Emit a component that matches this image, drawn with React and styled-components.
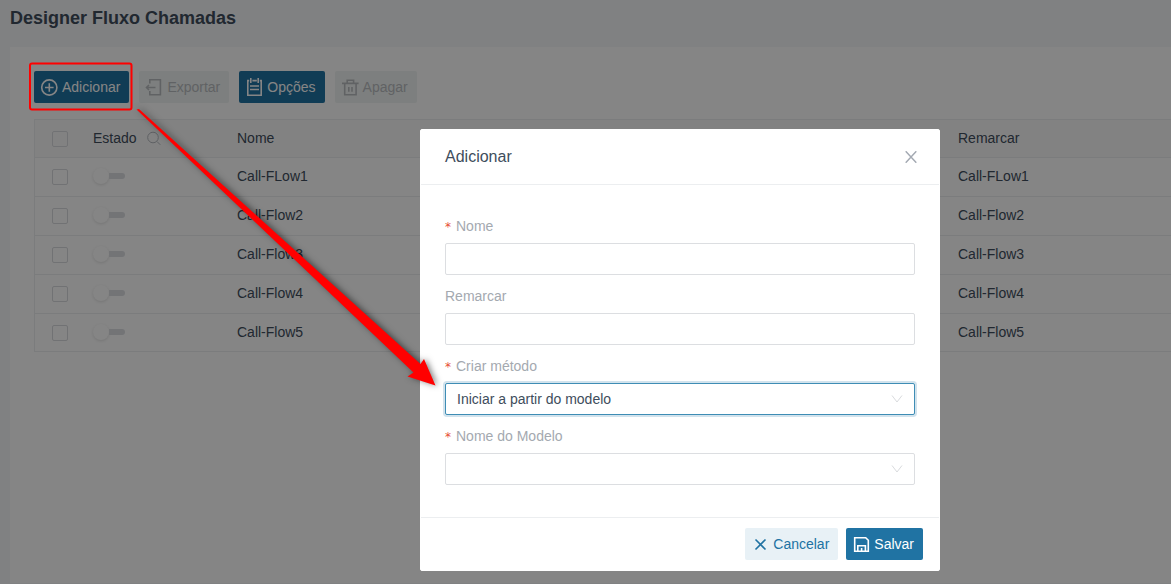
import React, { useState } from 'react';
import styled, { createGlobalStyle } from 'styled-components';

const flows = ['Call-FLow1', 'Call-Flow2', 'Call-Flow3', 'Call-Flow4', 'Call-Flow5'];

const AddIcon = () => (
  <Icon viewBox="0 0 18 18">
    <circle cx="9.3" cy="9.5" r="7.6" />
    <path d="M9.3 5.2v8.6M5 9.5h8.6" />
  </Icon>
);

const ExportIcon = () => (
  <Icon viewBox="0 0 18 18">
    <path d="M4.8 5.5V1.8h10.6v15H4.8v-3.7" />
    <path d="M10.5 9.5H1.5M4 7L1.5 9.5L4 12" />
  </Icon>
);

const OptionsIcon = () => (
  <Icon viewBox="0 0 18 18">
    <path d="M4.2 2.6H2.8v14.6h13.4V2.6h-1.4M7.4 2.6h4.4M5.8 0v5M13.2 0v5M5 8h9M5 11.5h9" />
  </Icon>
);

const DeleteIcon = () => (
  <Icon viewBox="0 0 18 18">
    <path d="M1 5.4h16.6M6.2 5.4V2.3h6.4v3.1M3.7 5.4v11.4h11.4V5.4M7.8 9v4.8M11 9v4.8" />
  </Icon>
);

const CancelIcon = () => (
  <Icon viewBox="0 0 18 18">
    <path d="M4.5 4.5l10 10M14.5 4.5l-10 10" />
  </Icon>
);

const SaveIcon = () => (
  <Icon viewBox="0 0 18 18">
    <path d="M2.7 2.7h11l2.6 2.6v11H2.7zM5.8 16.3v-5.6h7.6v5.6M9.6 13v3" />
  </Icon>
);

const SelectArrow = () => (
  <Arrow viewBox="0 0 12 12">
    <path d="M1 2.5l5 6.5l5-6.5" />
  </Arrow>
);

const App = () => {
  const [formData, setFormData] = useState({
    name: '',
    remark: '',
    method: 'template',
    template: '',
  });

  const handleChange = (e) => {
    setFormData({ ...formData, [e.target.name]: e.target.value });
  };

  return (
    <>
      <GlobalStyle />
      <Page>
        <Heading>Designer Fluxo Chamadas</Heading>
        <Card>
          <Toolbar>
            <Button type="button"><AddIcon />Adicionar</Button>
            <Button type="button" $variant="muted" disabled><ExportIcon />Exportar</Button>
            <Button type="button"><OptionsIcon />Opções</Button>
            <Button type="button" $variant="muted" disabled><DeleteIcon />Apagar</Button>
          </Toolbar>
          <Table>
            <thead>
              <tr>
                <Th $width="50px" $center><Checkbox aria-label="Todos" /></Th>
                <Th $width="144px">
                  <HeadLabel>
                    Estado
                    <SearchIcon viewBox="0 0 14 14">
                      <circle cx="6" cy="6.5" r="5.3" />
                      <path d="M10 10.5l3.3 3.3" />
                    </SearchIcon>
                  </HeadLabel>
                </Th>
                <Th>Nome</Th>
                <Th $width="221px">Remarcar</Th>
              </tr>
            </thead>
            <tbody>
              {flows.map((flow) => (
                <Row key={flow}>
                  <Td $center><Checkbox aria-label={flow} /></Td>
                  <Td><Switch role="switch" aria-label={`Estado ${flow}`} /></Td>
                  <Td>{flow}</Td>
                  <Td>{flow}</Td>
                </Row>
              ))}
            </tbody>
          </Table>
        </Card>
      </Page>

      <Mask>
        <Dialog role="dialog" aria-labelledby="dialog-title">
          <DialogHeader>
            <DialogTitle id="dialog-title">Adicionar</DialogTitle>
            <CloseButton type="button" aria-label="Fechar">
              <svg width="12" height="12" viewBox="0 0 12 12">
                <path d="M0.7 0.3l10.6 11.4M11.3 0.3L0.7 11.7" />
              </svg>
            </CloseButton>
          </DialogHeader>
          <DialogBody id="flow-form">
            <Field>
              <Label htmlFor="name" $required>Nome</Label>
              <Input id="name" name="name" value={formData.name} onChange={handleChange} />
            </Field>
            <Field>
              <Label htmlFor="remark">Remarcar</Label>
              <Input id="remark" name="remark" value={formData.remark} onChange={handleChange} />
            </Field>
            <Field>
              <Label htmlFor="method" $required>Criar método</Label>
              <SelectBox>
                <Select id="method" name="method" value={formData.method} onChange={handleChange} $active>
                  <option value="template">Iniciar a partir do modelo</option>
                </Select>
                <SelectArrow />
              </SelectBox>
            </Field>
            <Field>
              <Label htmlFor="template" $required>Nome do Modelo</Label>
              <SelectBox>
                <Select id="template" name="template" value={formData.template} onChange={handleChange}>
                  <option value="" />
                </Select>
                <SelectArrow />
              </SelectBox>
            </Field>
          </DialogBody>
          <DialogFooter>
            <Button type="button" $variant="light"><CancelIcon />Cancelar</Button>
            <Button type="submit" form="flow-form"><SaveIcon />Salvar</Button>
          </DialogFooter>
        </Dialog>
      </Mask>

      <Annotation width="450" height="400" viewBox="0 0 450 400" aria-hidden="true">
        <rect x="30" y="63.5" width="101.5" height="46" rx="2" />
        <path d="M136.5 109.5L139 109L420.5 364L424 359L435.5 385.5L407.5 376.5L413.5 372.5Z" />
      </Annotation>
    </>
  );
};

const GlobalStyle = createGlobalStyle`
  *, *::before, *::after {
    box-sizing: border-box;
  }

  body {
    margin: 0;
    background: #f5f7fa;
    color: #404d5c;
    font-family: "Liberation Sans", Arial, sans-serif;
    font-size: 14px;
    line-height: 22px;
  }

  button, input, select {
    margin: 0;
    font: inherit;
    color: inherit;
  }
`;

const Page = styled.div`
  display: flex;
  flex-direction: column;
  min-height: 100vh;
  padding: 0 0 1px 10px;
`;

const Heading = styled.h1`
  margin: 0;
  padding: 6px 0 17px;
  font-size: 18px;
  line-height: 24px;
`;

const Card = styled.main`
  flex: 1;
  padding: 24px 0 24px 24px;
  background: #fff;
`;

const Toolbar = styled.div`
  display: flex;
  gap: 10px;
  margin-bottom: 16px;
`;

const variants = {
  primary: 'background: #2073a3; color: #fff;',
  muted: 'background: #f0f4f3; color: #b9bcc0;',
  light: 'background: #e8f1f6; color: #2073a3;',
};

const Button = styled.button`
  display: flex;
  align-items: center;
  gap: 4px;
  height: 32px;
  padding: 0 9px 0 6px;
  border: none;
  border-radius: 2px;
  ${({ $variant }) => variants[$variant || 'primary']}
`;

const Icon = styled.svg`
  width: 18px;
  height: 18px;
  fill: none;
  stroke: currentColor;
  stroke-width: 1.6;
`;

const Table = styled.table`
  width: 100%;
  table-layout: fixed;
  border: 1px solid #eceef0;
  border-right: none;
  border-spacing: 0;
`;

const Th = styled.th`
  width: ${({ $width }) => $width || 'auto'};
  height: 38px;
  padding: 0 8px 2px;
  background: #fafafa;
  border-bottom: 1px solid #eceef0;
  font-weight: normal;
  text-align: ${({ $center }) => ($center ? 'center' : 'left')};
`;

const Td = styled.td`
  height: 39px;
  padding: 0 8px 2px;
  border-bottom: 1px solid #eceef0;
  text-align: ${({ $center }) => ($center ? 'center' : 'left')};
`;

const Row = styled.tr`
  &:last-child ${Td} {
    height: 37px;
    border-bottom: none;
  }
`;

const HeadLabel = styled.span`
  display: flex;
  align-items: center;
  gap: 10px;
`;

const SearchIcon = styled.svg`
  width: 14px;
  height: 14px;
  fill: none;
  stroke: #b4b8be;
`;

const Checkbox = styled.input.attrs({ type: 'checkbox' })`
  display: inline-block;
  width: 16px;
  height: 16px;
  appearance: none;
  border: 1px solid #d9dbde;
  border-radius: 2px;
  vertical-align: middle;
`;

const Switch = styled.input.attrs({ type: 'checkbox' })`
  display: flex;
  align-items: center;
  width: 32px;
  height: 16px;
  appearance: none;

  &::before {
    content: '';
    width: 16px;
    height: 16px;
    border-radius: 50%;
    background: #fff;
    box-shadow: 0 1px 3px rgba(0, 0, 0, 0.12);
  }

  &::after {
    content: '';
    flex: 1;
    height: 6px;
    border-radius: 0 3px 3px 0;
    background: #dcdfe3;
  }
`;

const Mask = styled.div`
  position: fixed;
  inset: 0;
  display: flex;
  align-items: flex-start;
  justify-content: center;
  padding: 129px 0 0 189px;
  background: rgba(0, 0, 0, 0.48);
`;

const Dialog = styled.section`
  width: 520px;
  max-width: 100%;
  border: 1px solid #fff;
  border-radius: 2px;
  background: #fff;
`;

const DialogHeader = styled.header`
  display: flex;
  align-items: center;
  justify-content: space-between;
  height: 55px;
  padding: 0 16px 0 24px;
  border-bottom: 1px solid #eceef0;
`;

const DialogTitle = styled.h2`
  margin: 0;
  font-size: 16px;
  font-weight: normal;
`;

const CloseButton = styled.button`
  display: flex;
  padding: 6px;
  border: none;
  background: none;

  svg {
    fill: none;
    stroke: #a3a9b2;
    stroke-width: 1.5;
  }
`;

const DialogBody = styled.form`
  display: grid;
  gap: 4px;
  padding: 24px 24px 32px;
`;

const Field = styled.div`
  display: flex;
  flex-direction: column;
`;

const Label = styled.label`
  line-height: 34px;
  color: #a4a9b0;

  &::before {
    content: '*';
    display: ${({ $required }) => ($required ? 'inline-block' : 'none')};
    margin-right: 5px;
    color: #e64c33;
    font-family: "DejaVu Sans", sans-serif;
    font-size: 12px;
    line-height: 1;
  }
`;

const Input = styled.input`
  width: 100%;
  height: 32px;
  padding: 0 11px;
  border: 1px solid #dcdee1;
  border-radius: 2px;
  background: #fff;
`;

const SelectBox = styled.div`
  position: relative;
`;

const Select = styled.select`
  display: block;
  width: 100%;
  height: 32px;
  padding: 0 11px;
  appearance: none;
  border: 1px solid ${({ $active }) => ($active ? '#3e8db5' : '#dcdee1')};
  border-radius: 2px;
  background: #fff;
  box-shadow: ${({ $active }) => ($active ? '0 0 0 2px #d2e3ed' : 'none')};
`;

const Arrow = styled.svg`
  position: absolute;
  top: 10px;
  right: 12px;
  width: 12px;
  height: 12px;
  fill: none;
  stroke: #d9dbde;
  pointer-events: none;
`;

const DialogFooter = styled.footer`
  display: flex;
  justify-content: flex-end;
  gap: 8px;
  padding: 10px 16px;
  border-top: 1px solid #eceef0;
`;

const Annotation = styled.svg`
  position: absolute;
  top: 0;
  left: 0;
  pointer-events: none;

  rect {
    fill: none;
    stroke: #f00;
    stroke-width: 2;
  }

  path {
    fill: #f00;
    filter: drop-shadow(2px 0 3px rgba(0, 0, 0, 0.5));
  }
`;

export default App;
